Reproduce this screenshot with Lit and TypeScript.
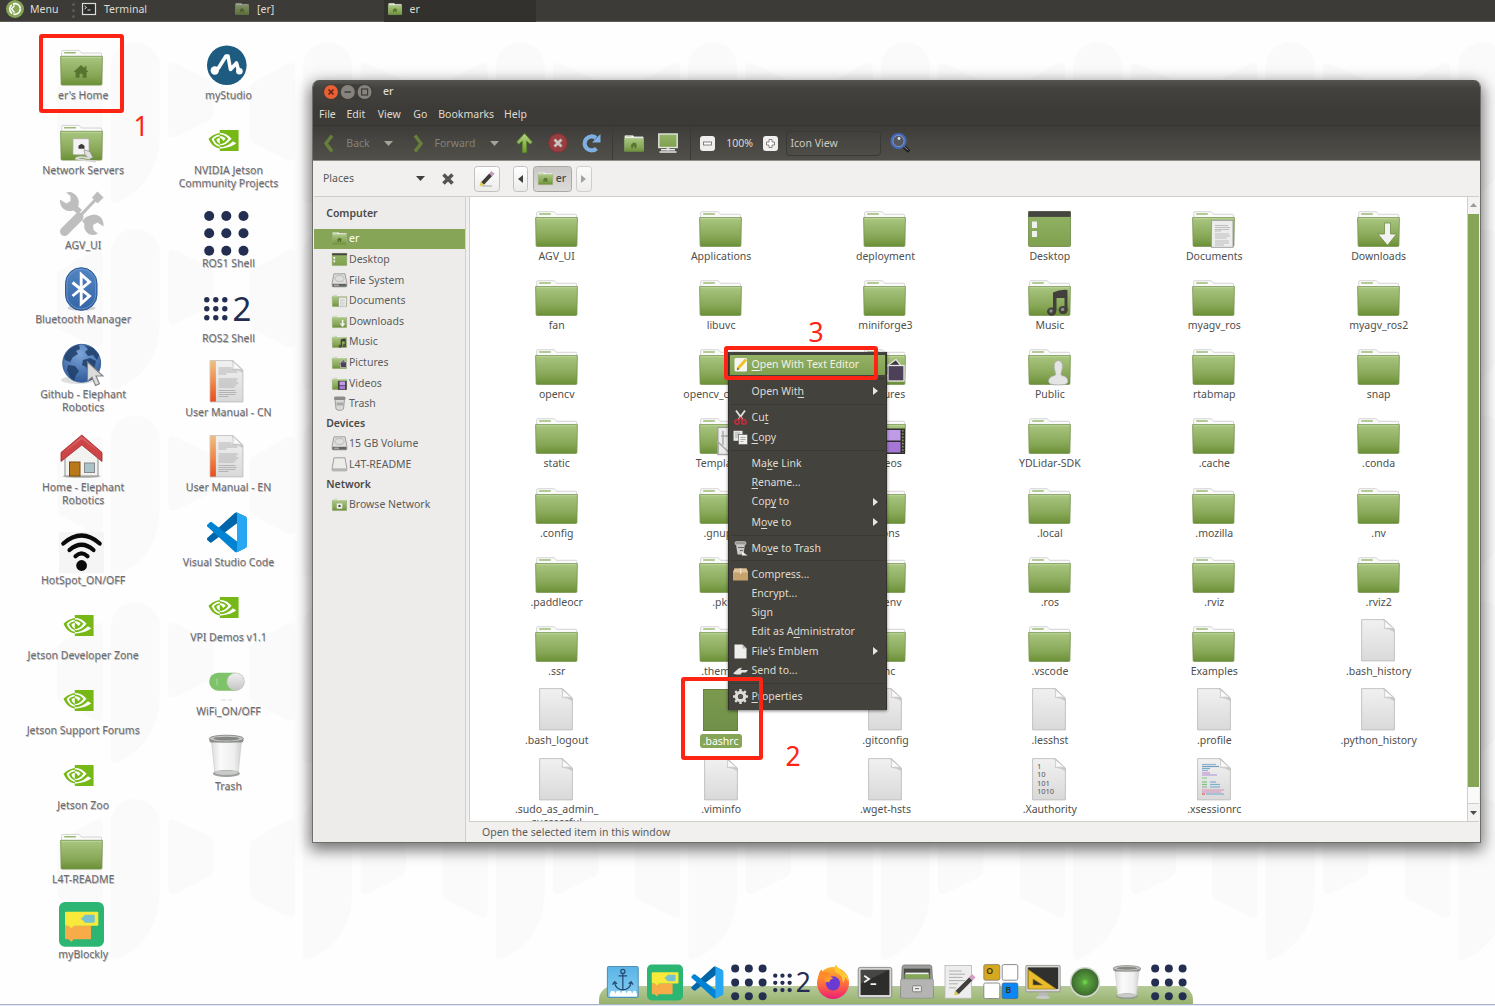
import { LitElement, html, svg, css, nothing } from "lit";
import { customElement } from "lit/decorators.js";
import { classMap } from "lit/directives/class-map.js";
import { styleMap } from "lit/directives/style-map.js";

/* ---------- emblems, drawn in the 43x36 box of a folder ---------- */
const houseShape = svg`<path d="M21 15.2l3.6 3.4v-2h1.8v3.7l2.2 2.1h-2v5.6h-4v-4h-3v4h-4v-5.6h-2z" fill="#57752e"/>`;

const emblems: Record<string, unknown> = {
  none: nothing,
  home: houseShape,
  documents: svg`
    <rect x="19.5" y="9.3" width="21.5" height="27" fill="#ececec" stroke="#9a9a9a" stroke-width=".9"/>
    <path d="M23 14.5h13M23 16.5h15M23 18.5h14M23 20h6M23 23h14M23 25h15M23 27h12M23 30h14M23 32h14M23 34h9" stroke="#b9b9b9" stroke-width=".9"/>`,
  downloads: svg`<path d="M27.5 12h6v11h6l-9 11.3-9.6-11.3h6.6z" fill="#f2f2f2" stroke="#6f8f45" stroke-width=".8"/>`,
  music: svg`
    <path d="M25 12.5q7-3.4 14.5-2.6v20h-3v-12h-8v13h-3.5z" fill="#41403d"/>
    <ellipse cx="23.6" cy="31.6" rx="4.6" ry="4.1" fill="#41403d"/><ellipse cx="35.2" cy="30" rx="4.6" ry="4.1" fill="#41403d"/>
    <circle cx="23" cy="31" r="1.7" fill="#8e8e8b"/><circle cx="34.6" cy="29.4" r="1.7" fill="#8e8e8b"/>`,
  people: svg`<path d="M20.5 32.5q0-4.800 6.300-6 1.700-.8.5-3-3.500-11.300 3-12 6.500.7 3 12-1.200 2.200.5 3 6.200 1.200 6.200 6 0 3.500-9.750 3.500t-9.750-3.500z" fill="#e4e4e4" stroke="#a9a9a9" stroke-width=".7"/>`,
  pictures: svg`
    <path d="M20 20l13-9.500 7 9-12 12z" fill="#3f3a40" stroke="#ddd" stroke-width="1.300"/>
    <rect x="25" y="16.500" width="16" height="15.500" fill="#4c4158" stroke="#e8e8e8" stroke-width="1.300"/>`,
  videos: svg`
    <rect x="17" y="10.500" width="25" height="25.500" fill="#2f2f2d"/>
    <rect x="21.500" y="12" width="16" height="10.500" fill="#bf9be8"/><rect x="21.500" y="24" width="16" height="10.500" fill="#a677d6"/>
    <path d="M19.300 12v23M39.800 12v23" stroke="#8a9b63" stroke-width="1.600" stroke-dasharray="1.600 1.600"/>`,
  templates: svg`
    <rect x="19" y="9.500" width="22" height="27" fill="#ececec" stroke="#9a9a9a" stroke-width=".9"/>
    <path d="M19 24l13 12.500h-13zM24 13v14M22 18h13" stroke="#a8a8a8" stroke-width="1.500" fill="none"/>`,
  network: svg`
    <rect x="13.500" y="14.500" width="16" height="15.500" rx="1" fill="#f3f3f3" stroke="#999" stroke-width=".7"/>
    <path d="M18.500 25v-4.500l3-2 3 2v4.500z" fill="#3c3c3a"/>`,
  cable: svg`
    <rect x="13" y="14" width="16" height="16" rx="1" fill="#f3f3f3" stroke="#aaa" stroke-width=".7"/>
    <path d="M18.500 24v-3l3-2 3 2v3z" fill="#3c3c3a"/>
    <path d="M24 25l6 2 3 6-4 1-4-4z" fill="#e0e0e0" stroke="#8c8c8c" stroke-width=".7"/>
    <path d="M30 34q-12-3-14 0 6 1.500 20 3" fill="none" stroke="#d8d8d8" stroke-width="1.800"/>`,
};

const folderShape = (emblem = "none") => svg`
  <path d="M1.700 34V1.900Q1.700.7 2.800.7H18.500Q19.600.7 20.300 1.600L21.600 3.300H40.600Q41.600 3.300 41.600 4.300V34z" fill="#fafafa" stroke="#c9c9c9" stroke-width=".8"/>
  <rect x="4" y="2.200" width="12" height="1.500" rx=".7" fill="#9aba72"/>
  <path d="M.6 6.600H42.400L41.900 34.400Q41.900 35.400 40.900 35.400H2.100Q1.100 35.400 1.100 34.400z" fill="url(#folderGreen)" stroke="#76934f" stroke-width=".8"/>
  <path d="M1.200 7.700H41.800" stroke="#c0d6a0" stroke-width=".8"/>
  ${emblems[emblem]}`;

const folder = (emblem = "none", cls = "folder") => html`<svg class=${cls} viewBox="0 0 43 36">${folderShape(emblem)}</svg>`;

const desktopGlyph = (cls: string) => html`<svg class=${cls} viewBox="0 0 43 36">
  <rect x=".5" y=".5" width="42" height="35" rx="1" fill="url(#deskGreen)" stroke="#6c8846" stroke-width=".8"/>
  <rect x=".3" y=".3" width="42.400" height="5.600" fill="#464541"/>
  <rect x="4" y="10.500" width="5" height="6.500" fill="#f0f0f0"/><rect x="4" y="20" width="5" height="6" fill="#f0f0f0"/>
</svg>`;

const pageShape = svg`
  <path d="M.6.6H23.500L33.400 10V41.900H.6z" fill="url(#paper)" stroke="#bdbdbd" stroke-width=".9"/>
  <path d="M22.500.8Q24.500 3 23.200 9.400 29 8.300 33.200 10.200z" fill="#fbfbfb" stroke="#c2c2c2" stroke-width=".8"/>
  <path d="M23.500 9.800q6-.8 9.600.8v2.400q-4-2.800-9.600-3.200z" fill="#bbb" opacity=".7"/>`;

const binaryRows: [number, string][] = [[10.500, "1"], [19, "10"], [27.500, "101"], [36, "1010"]];
const codeRows: [number, number, number, string][] = [
  [5, 6.500, 14, "#8fb4cc"], [5, 8.500, 17, "#6fa0c0"], [5, 10.500, 8, "#7da9c4"], [5, 12.500, 6, "#8fb4cc"],
  [5, 15, 8, "#c88fd0"], [5, 17, 15, "#b6a0d8"], [5, 20, 5, "#8fd08f"], [5, 24, 5, "#79c679"], [13, 24, 6, "#7fb0cf"],
  [5, 26.500, 5, "#79c679"], [13, 26.500, 10, "#7fb0cf"], [5, 29, 5, "#aaa"], [13, 29, 10, "#7fb0cf"],
  [5, 32, 22, "#d9a0b8"], [5, 34, 19, "#cf9cc0"], [5, 36, 3, "#e05050"], [9, 36, 18, "#7fb0cf"],
];

const page = (kind = "plain") => html`<svg class="page" viewBox="0 0 34 42.500">
  ${pageShape}
  ${kind === "binary" ? binaryRows.map(([y, t]) => svg`<text class="binary" x="5" y=${y}>${t}</text>`) : nothing}
  ${kind === "code" ? codeRows.map(([x, y, w, c]) => svg`<rect x=${x} y=${y - 0.6} width=${w} height="1.200" fill=${c}/>`) : nothing}
</svg>`;

/* ---------- launchers, each drawn in a 45x45 box ---------- */
const dots = (xs: number[], ys: number[], r: number) =>
  ys.map((y) => xs.map((x) => svg`<circle cx=${x} cy=${y} r=${r} fill="#232e50"/>`));

const trashShape = svg`
  <path d="M7.500 9L11 42q11.500 4.500 23 0L37.500 9z" fill="url(#glass)" stroke="#cfcfcf" stroke-width=".8"/>
  <ellipse cx="22.400" cy="41.500" rx="13.500" ry="3.600" fill="#8b8f8a" opacity=".8"/>
  <ellipse cx="22.400" cy="40.600" rx="12" ry="2.200" fill="#c9cbc8"/>
  <rect x="5.300" y="5" width="34.200" height="5.500" rx="2.600" fill="#8d8f8b"/>
  <ellipse cx="22.400" cy="6.600" rx="17" ry="3.400" fill="#c7c8c5" stroke="#8c8e8a" stroke-width="1"/>
  <ellipse cx="22.400" cy="6.600" rx="13" ry="1.900" fill="#858783"/>`;

const launchers: Record<string, unknown> = {
  home: svg`<g transform="translate(1 8.700)">${folderShape("home")}</g>`,
  network: svg`<g transform="translate(1 8.700)">${folderShape("cable")}</g>`,
  folder: svg`<g transform="translate(1 8.700)">${folderShape()}</g>`,
  tools: svg`
    <path d="M4 41L22 24M22 24L40 5" stroke="#bebebe" stroke-width="3.200"/>
    <path d="M20 26L5.500 40.500" stroke="#bebebe" stroke-width="9" stroke-linecap="round"/>
    <path d="M34 6.500L38.500 1.500 43.500 6.500 38.500 11.500z" fill="#bebebe" stroke="#bebebe" stroke-width="1.500"/>
    <path d="M.8 8.500l6.700 4 4-2.500 0-5-4.500-3.500Q14-.8 18.500 6.500 21 11.500 19 15.500L23 19 19 23.500 14.500 19.500Q8.500 21.500 4 17.500.8 14 .8 8.500z" fill="#bebebe"/>
    <path d="M27 26L29.500 25Q36.500 21.500 41.500 26 45 30 44.500 35.500L38.500 31.500 34 34 34.500 39 39 42.500Q32 46.500 27 40.500 24.500 37 25.200 32.500L23 30z" fill="#bebebe"/>`,
  bluetooth: svg`
    <ellipse cx="22.500" cy="43" rx="14" ry="3" fill="#000" opacity=".15"/>
    <rect x="6.500" y="2.700" width="31.500" height="42.600" rx="15.700" fill="url(#btBlue)" stroke="#2a5795" stroke-width="1"/>
    <rect x="7.900" y="4.100" width="28.700" height="39.800" rx="14.300" fill="none" stroke="#6f99cd" stroke-width=".8"/>
    <path d="M13.500 17.500L30.500 31 22.200 38.500V9.500L30.500 17 13.500 31" fill="none" stroke="#fff" stroke-width="2.900"/>`,
  globe: svg`
    <ellipse cx="19" cy="40" rx="17" ry="4" fill="#000" opacity=".12"/>
    <circle cx="22.700" cy="23.300" r="19" fill="url(#globeBlue)" stroke="#2b5590" stroke-width=".8"/>
    <path d="M8 12Q12 6 20 5L21 9 17 11 19 14 14 17 11 22 6 20 5 17zM9 25L16 26 20 31 17 35 15 41 11 37 8 30zM25 5L34 8 40 15 38 20 34 15 29 16 26 12 29 9zM24 20L31 18 37 21 35 30 30 34 27 27 23 25z" fill="#1f3d68" opacity=".85"/>
    <path d="M28.500 22V41.200L33 37.200 36.500 45.500 40.500 43.800 37 36H44z" fill="#dcdcdc" stroke="#828282" stroke-width="1.100"/>`,
  house: svg`
    <ellipse cx="22.500" cy="43.300" rx="19" ry="1.800" fill="#000" opacity=".25"/>
    <path d="M6 22L22.500 9 39 22V43H6z" fill="#f2f2f0" stroke="#8d8d88" stroke-width="1"/>
    <rect x="10.500" y="29" width="10.500" height="14" fill="#b9791a" stroke="#7c4c08" stroke-width="1"/>
    <rect x="25.500" y="30" width="10" height="9.500" fill="#a9c3c9" stroke="#888" stroke-width="1"/>
    <path d="M22.800 2L43 19.500V28.500L22.800 12 2 28.500V19.500z" fill="#ce4547" stroke="#9c2a2c" stroke-width=".8"/>
    <path d="M22.800 3.500L41 19.500 22.800 6 4 20z" fill="#e2787a" opacity=".6"/>`,
  hotspot: svg`
    <rect x="0" y="6" width="45" height="41.200" fill="#f5f5f5"/>
    <g fill="none" stroke="#0a0a0a" stroke-width="4.200" stroke-linecap="round">
      <path d="M4.300 17.500Q22.500 1.500 40.700 17.500"/><path d="M10.500 24Q22.500 13.500 34.500 24"/><path d="M16.500 30.200Q22.500 24.500 28.500 30.200"/>
    </g>
    <circle cx="22.600" cy="39.500" r="5.400" fill="#0a0a0a"/>`,
  nvidia: svg`<g transform="translate(4.600 8.800) scale(1.250 1.310)"><path fill="#76b916" d="M8.948 8.798v-1.430a6.700 6.700 0 0 1 .424-.018c3.922-.124 6.493 3.374 6.493 3.374s-2.774 3.851-5.750 3.851c-.398 0-.787-.062-1.158-.185v-4.346c1.528.185 1.837.857 2.747 2.385l2.040-1.714s-1.492-1.952-4-1.952a6.016 6.016 0 0 0-.796.035m0-4.735v2.138l.424-.027c5.450-.185 9.010 4.470 9.010 4.470s-4.080 4.964-8.330 4.964c-.370 0-.733-.035-1.095-.097v1.325c.3.035.610.062.910.062 3.957 0 6.820-2.023 9.593-4.408.459.371 2.340 1.263 2.730 1.652-2.633 2.208-8.772 3.984-12.253 3.984-.335 0-.653-.018-.971-.053v1.864H24V4.063zm0 10.326v1.131c-3.657-.654-4.673-4.460-4.673-4.460s1.758-1.944 4.673-2.262v1.237H8.940c-1.528-.186-2.730 1.245-2.730 1.245s.680 2.412 2.739 3.110M2.456 10.900s2.164-3.197 6.500-3.533V6.201C4.153 6.590 0 10.653 0 10.653s2.350 6.802 8.948 7.420v-1.237c-4.840-.6-6.492-5.936-6.492-5.936z"/></g>`,
  studio: svg`
    <circle cx="22.800" cy="24.300" r="19.800" fill="#1d5b80"/>
    <path d="M10.500 29.500L14.500 27 22 15 24 15 26.500 28.500 32.500 22 35 31" fill="none" stroke="#fff" stroke-width="3.600" stroke-linejoin="round" stroke-linecap="round"/>
    <circle cx="10.800" cy="29.500" r="4.200" fill="#fff"/><circle cx="35.400" cy="30.300" r="3.300" fill="#fff"/>`,
  ros: dots([5.200, 22.300, 39.500], [7, 24.300, 41.700], 5),
  ros2: svg`${dots([2.800, 11.800, 20.800], [15.800, 24.800, 33.800], 2.700)}<text class="two" x="28.500" y="36.500">2</text>`,
  manual: svg`
    <g transform="translate(5.500 2)">${pageShape}
      <rect x=".8" y=".8" width="5.600" height="40.800" fill="url(#spine)"/>
      <path d="M9 8h13M9 10h18M9 12h19M9 14h8M9 19h19M9 21h18M9 23h20M9 25h18M9 27h16M9 30.500h17M9 32.500h18M9 34.500h17M9 36.500h10" stroke="#b4b4b4" stroke-width="1"/>
    </g>`,
  vscode: svg`<g transform="translate(3 4.300) scale(.4)">
    <path fill="#0065a9" d="M96.460 10.800L75.860.875C73.470-.27 70.620.21 68.750 2.080L1.300 63.580c-1.810 1.650-1.810 4.510 0 6.160l5.510 5.010c1.490 1.350 3.720 1.450 5.320.24L93.360 13.370c2.730-2.070 6.640-.12 6.640 3.300v-.24c0-2.400-1.380-4.590-3.540-5.630z"/>
    <path fill="#0083d3" d="M96.460 89.200L75.860 99.120c-2.390 1.150-5.240.67-7.110-1.200L1.300 36.420c-1.810-1.650-1.810-4.510 0-6.160l5.510-5.010c1.490-1.350 3.720-1.450 5.320-.24L93.360 86.630c2.730 2.070 6.640.12 6.640-3.300v.24c0 2.400-1.380 4.590-3.540 5.630z"/>
    <path fill="#27a6f2" d="M75.860 99.130c-2.390 1.150-5.240.66-7.110-1.210 2.310 2.310 6.250.67 6.250-2.590V4.670c0-3.260-3.940-4.890-6.250-2.590 1.870-1.870 4.720-2.360 7.110-1.210l20.600 9.910c2.160 1.040 3.540 3.230 3.540 5.630v67.180c0 2.400-1.380 4.590-3.540 5.630z"/>
  </g>`,
  toggle: svg`
    <rect x="5.200" y="15.700" width="35.300" height="18" rx="9" fill="#7ec26a"/>
    <path d="M13 21.500v7" stroke="#a9dc9a" stroke-width="1"/>
    <circle cx="31.700" cy="24.700" r="8.700" fill="url(#knob)" stroke="#c9c9c9" stroke-width=".6"/>
    <path d="M17 43h5M24 43h4" stroke="#dadada" stroke-width="1.200"/>`,
  trash: trashShape,
  blockly: svg`
    <rect x="0" y="2" width="45" height="44.800" rx="6" fill="#2db673"/>
    <path d="M6 25.500H32V38.200Q32 39.200 31 39.200H14.500L12.500 42 9.500 39.200H7Q6 39.200 6 38.200z" fill="#f7ab49"/>
    <path d="M7 11.700H38.300Q39.300 11.700 39.300 12.700V24.700Q39.300 25.700 38.300 25.700H15L12.500 28.200 9.500 25.700H7Q6 25.700 6 24.700V12.700Q6 11.700 7 11.700z" fill="#f9e93a"/>
    <path d="M26 14.700H34.700Q35.700 14.700 35.700 15.700V21.700Q35.700 22.700 34.700 22.700H26L24 20.500 21.700 18.700 24 17z" fill="#76c1cf"/>`,
  anchor: svg`
    <rect x="3" y="4.500" width="38.500" height="38.500" rx="2" fill="url(#sky)" stroke="#4f8fb8" stroke-width="1.300"/>
    <g fill="none" stroke="#234c74" stroke-width="1.600"><circle cx="22.300" cy="10.500" r="2.600"/><path d="M22.300 13v20M17 16h10.600M12 24q1 9 10.300 9.500Q31.600 33 32.600 24M9.500 27l2.500-3.500 3 2.500M29.600 26l3-2.500 2.500 3.500"/></g>
    <path d="M6 42v-3l1.500-4h4l1.500 3 1.500-3h4l1.500 3 1.500-3h4l1.500 3 1.500-3h4l1.500 3 1.500-3h3l1.500 4v3z" fill="#fff"/>`,
  firefox: svg`
    <circle cx="22.500" cy="25" r="20" fill="url(#fox)"/>
    <path d="M26 2Q30 8 34 11 41 15 42 24 38 14 30 13z" fill="#ffde3a"/>
    <path d="M26 2Q23 7 26 12 35 15 35 25 40 18 36 12 29 8 26 2z" fill="#ffc833"/>
    <path d="M4 20Q4 12 8 8 9 11 11 12 15 11 19 13 15 16 13 19z" fill="#ff8a2a"/>
    <circle cx="22.500" cy="25.500" r="8.800" fill="#6a3bd2"/>
    <path d="M11 20q6-5 12-1-5 2-5 5-5 1-7-4z" fill="#ff9a30"/>`,
  terminal: svg`
    <rect x="1.500" y="5.500" width="42" height="38" rx="2.500" fill="#d5d5d3" stroke="#8a8a88" stroke-width="1.200"/>
    <rect x="4.500" y="8.500" width="36" height="31.500" fill="#2d2d2b"/>
    <path d="M4.500 8.500h36L4.500 26z" fill="#fff" opacity=".12"/>
    <path d="M9 16l6 4-6 4M17 26.500h7" fill="none" stroke="#f4f4f4" stroke-width="2.300"/>`,
  cabinet: svg`
    <path d="M4 5Q4 2.500 7 2.500H38Q41 2.500 41 5L43 43H2z" fill="#9d9d9b" stroke="#747472" stroke-width="1"/>
    <rect x="6" y="7" width="33" height="13" fill="#4b4b46"/>
    <path d="M8 12h29v8H8z" fill="#f0f0ee"/><path d="M7 14h31v6H7z" fill="#83a657"/>
    <rect x="2" y="20" width="41" height="24" rx="1.500" fill="#b4b4b2" stroke="#8a8a88" stroke-width=".8"/>
    <rect x="17" y="28.500" width="11" height="7.500" rx="1" fill="#eee" stroke="#7c7c7a" stroke-width="1.200"/><path d="M20 32h5" stroke="#777" stroke-width="1.500"/>`,
  editor: svg`
    <rect x="5" y="3" width="33" height="41" fill="#ededed" stroke="#b7b7b7" stroke-width="1"/>
    <path d="M10 10h16M10 14h20M10 18h17M10 22h20M10 26h11M10 31h9" stroke="#ababab" stroke-width="1.200"/>
    <path d="M20 37L38 19" stroke="#403f3b" stroke-width="5.500"/><path d="M37 20l4-4" stroke="#d79bc4" stroke-width="6"/><path d="M16.500 40.500l1-6.500 5 5z" fill="#d8c65a"/>`,
  keys: svg`
    <rect x="1" y="2" width="20" height="19.500" rx="2" fill="#d6a81e" stroke="#7c7c7c" stroke-width="1"/><rect x="24" y="2" width="19.500" height="19.500" rx="2" fill="#fff" stroke="#888" stroke-width="1.200"/>
    <rect x="1" y="25" width="20" height="19.500" rx="2" fill="#fff" stroke="#888" stroke-width="1.200"/><rect x="24" y="25" width="19.500" height="19.500" rx="2" fill="#0b86f5" stroke="#46688c" stroke-width="1"/>
    <text class="key" x="4" y="14">O</text><text class="key" x="28" y="38">B</text>`,
  ruler: svg`
    <path d="M18 36h9l2 7H16z" fill="#b9b9b7"/><ellipse cx="22.500" cy="43" rx="9" ry="2" fill="#c9c9c7"/>
    <rect x="1" y="3" width="43" height="33" rx="1.500" fill="#d8d8d6" stroke="#8a8a88" stroke-width="1"/><rect x="3.500" y="5.500" width="38" height="27" fill="#30302e"/>
    <path fill-rule="evenodd" d="M4 8V32.500H39zM10 20V27.500H22z" fill="#e8bc2c" stroke="#9c7a12" stroke-width=".8"/>`,
  orb: svg`
    <circle cx="22.500" cy="24" r="19" fill="#d4d8d0"/><circle cx="22.500" cy="24" r="17" fill="url(#orbGreen)"/>`,
};

const launcherIcon = (name: string, cls: string) => html`<svg class=${cls} viewBox="0 0 45 45">${launchers[name]}</svg>`;

/* ---------- small menu, toolbar and sidebar glyphs ---------- */
const small: Record<string, unknown> = {
  drive: svg`<path d="M2 .8h11L14.800 9.500V13q0 .8-.8.8H1q-.8 0-.8-.8V9.500z" fill="#dededc" stroke="#8c8c8a" stroke-width=".8"/><path d="M.6 10.800h13.800V13.600H.6z" fill="#62625f"/><ellipse cx="7.500" cy="5.500" rx="4.500" ry="3" fill="none" stroke="#b0b0ae" stroke-width=".8"/><path d="M2 12.200h5" stroke="#ddd" stroke-width=".8"/>`,
  usb: svg`<path d="M2 .8h11L14.800 11V13q0 .8-.8.8H1q-.8 0-.8-.8V11z" fill="#ececea" stroke="#8c8c8a" stroke-width=".8"/><path d="M.5 11.300h14V13.500H.5z" fill="#b5b5b3"/>`,
  bin: svg`<path d="M3 3h9.500l-1 10q-.3 1.300-3.700 1.300T4 13z" fill="#d9d9d7" stroke="#898987" stroke-width=".8"/><rect x="2" y=".6" width="11.500" height="3.400" rx="1.500" fill="#8b8b89"/><path d="M4.500 6.500h7v3h-7z" fill="#a9a9a7"/>`,
  edit: svg`<rect x="1.500" y="1" width="12.500" height="13.500" rx="1.500" fill="#f5f5f3"/><path d="M5 11.500L13 2.500" stroke="#eec321" stroke-width="2.800"/><path d="M3.800 13.200l.6-2.800 1.900 1.900z" fill="#7b5c17"/>`,
  cut: svg`<path d="M3 .5L9.500 9.500M12 .5L5.500 9.500" stroke="#dededc" stroke-width="1.900"/><circle cx="4" cy="12" r="2.100" fill="none" stroke="#c32b3a" stroke-width="1.700"/><circle cx="11" cy="12" r="2.100" fill="none" stroke="#c32b3a" stroke-width="1.700"/><path d="M5 10.500l2.500-2.800 2.500 2.800" stroke="#c32b3a" stroke-width="1.500" fill="none"/>`,
  copy: svg`<rect x=".5" y=".8" width="9" height="10" fill="#e6e6e4"/><path d="M2 3h5M2 5h3M2 7h3" stroke="#9a9a98" stroke-width=".8"/><rect x="5.500" y="4.500" width="9" height="10" fill="#f0f0ee" stroke="#55544f" stroke-width=".6"/><path d="M7.500 7.500h5M7.500 9.500h5M7.500 11.500h3" stroke="#9a9a98" stroke-width=".8"/>`,
  trashMove: svg`<path d="M3 3h9l-1.500 10.500h-6z" fill="#c9c9c7"/><rect x="2" y=".6" width="11" height="3.200" rx="1.400" fill="#989896" stroke="#d6d6d4" stroke-width=".6"/><path d="M5 6.500h6M7 9.500h3" stroke="#6a6965" stroke-width="1"/><path d="M9 10.500l5.500 4h-5.500z" fill="#eee"/>`,
  box: svg`<path d="M1.500 1.500h12L15 5v8.500H0V5z" fill="#c7a26c"/><path d="M1.500 1.500h12L15 5.500H0z" fill="#e0c499"/><path d="M7 1.500h1.200V7H7z" fill="#f2e3c8"/>`,
  sheet: svg`<path d="M1.500.5h8l4 4v10h-12z" fill="#efefed"/><path d="M9.500.5v4h4z" fill="#b9b9b7"/>`,
  send: svg`<path d="M0 10.500L5.500 5.500 9 4.500 7.500 7H15L13 9.500H9l-1.500 2H3z" fill="#e2e2e0"/>`,
  gear: svg`<circle cx="7.500" cy="7.500" r="4.200" fill="none" stroke="#dcdcda" stroke-width="3.200"/><path d="M7.500 0v15M0 7.500h15M2.200 2.200l10.600 10.600M12.800 2.200L2.200 12.800" stroke="#dcdcda" stroke-width="2.400" stroke-dasharray="3.200 8.600 3.200"/><circle cx="7.500" cy="7.500" r="2.200" fill="#55544f"/>`,
};
const smallIcon = (name: string) => html`<svg class="small" viewBox="0 0 15 15">${small[name]}</svg>`;

/* ---------- data ---------- */
interface Shortcut { icon: string; lines: string[] }
const s = (icon: string, ...lines: string[]): Shortcut => ({ icon, lines });
const shortcutColumns: Shortcut[][] = [
  [
    s("home", "er's Home"), s("network", "Network Servers"), s("tools", "AGV_UI"), s("bluetooth", "Bluetooth Manager"),
    s("globe", "Github - Elephant", "Robotics"), s("house", "Home - Elephant", "Robotics"), s("hotspot", "HotSpot_ON/OFF"),
    s("nvidia", "Jetson Developer Zone"), s("nvidia", "Jetson Support Forums"), s("nvidia", "Jetson Zoo"),
    s("folder", "L4T-README"), s("blockly", "myBlockly"),
  ],
  [
    s("studio", "myStudio"), s("nvidia", "NVIDIA Jetson", "Community Projects"), s("ros", "ROS1 Shell"), s("ros2", "ROS2 Shell"),
    s("manual", "User Manual - CN"), s("manual", "User Manual - EN"), s("vscode", "Visual Studio Code"), s("nvidia", "VPI Demos v1.1"),
    s("toggle", "WiFi_ON/OFF"), s("trash", "Trash"),
  ],
];

/* name, then an optional icon kind; folders are the default */
const files: [string, string?][] = [
  ["AGV_UI"], ["Applications"], ["deployment"], ["Desktop", "desktop"], ["Documents", "documents"], ["Downloads", "downloads"],
  ["fan"], ["libuvc"], ["miniforge3"], ["Music", "music"], ["myagv_ros"], ["myagv_ros2"],
  ["opencv"], ["opencv_contrib"], ["Pictures", "pictures"], ["Public", "people"], ["rtabmap"], ["snap"],
  ["static"], ["Templates", "templates"], ["Videos", "videos"], ["YDLidar-SDK"], [".cache"], [".conda"],
  [".config"], [".gnupg"], [".icons"], [".local"], [".mozilla"], [".nv"],
  [".paddleocr"], [".pki"], [".pyenv"], [".ros"], [".rviz"], [".rviz2"],
  [".ssr"], [".themes"], [".vnc"], [".vscode"], ["Examples"], [".bash_history", "page"],
  [".bash_logout", "page"], [".bashrc", "selected"], [".gitconfig", "page"], [".lesshst", "page"], [".profile", "page"], [".python_history", "page"],
  [".sudo_as_admin_ successful", "page"], [".viminfo", "page"], [".wget-hsts", "page"], [".Xauthority", "binary"], [".xsessionrc", "code"],
];

const sidebar: { title: string; rows: [string, string][] }[] = [
  { title: "Computer", rows: [["er", "home"], ["Desktop", "desktop"], ["File System", "drive"], ["Documents", "documents"], ["Downloads", "downloads"], ["Music", "music"], ["Pictures", "pictures"], ["Videos", "videos"], ["Trash", "bin"]] },
  { title: "Devices", rows: [["15 GB Volume", "drive"], ["L4T-README", "usb"]] },
  { title: "Network", rows: [["Browse Network", "network"]] },
];

const menus: [string, number][] = [["File", 27.500], ["Edit", 31.300], ["View", 35.500], ["Go", 25], ["Bookmarks", 65.800], ["Help", 30]];

/* label with the access key after "&"; an empty label is a separator */
interface Entry { label: string; h: number; icon?: string; sub?: boolean; active?: boolean }
const entries: Entry[] = [
  { label: "&Open With Text Editor", h: 19.500, icon: "edit", active: true }, { label: "", h: 7 },
  { label: "Open Wit&h", h: 19.500, sub: true }, { label: "", h: 6.500 },
  { label: "Cu&t", h: 19.500, icon: "cut" }, { label: "&Copy", h: 20, icon: "copy" }, { label: "", h: 6.500 },
  { label: "Ma&ke Link", h: 19 }, { label: "&Rename...", h: 19 }, { label: "Cop&y to", h: 20.500, sub: true }, { label: "M&ove to", h: 20, sub: true }, { label: "", h: 6.500 },
  { label: "Mo&ve to Trash", h: 19, icon: "trashMove" }, { label: "", h: 6.500 },
  { label: "Compress...", h: 20, icon: "box" }, { label: "Encrypt...", h: 19 }, { label: "Sign", h: 19 }, { label: "Edit as A&dministrator", h: 19 },
  { label: "File's Emblem", h: 20, icon: "sheet", sub: true }, { label: "Send to...", h: 19.500, icon: "send" }, { label: "", h: 6.500 },
  { label: "&Properties", h: 19.500, icon: "gear" },
];

const dock = ["anchor", "blockly", "vscode", "ros", "ros2", "firefox", "terminal", "cabinet", "editor", "keys", "ruler", "orb", "trash", "ros"];

const rowTops = [42.300, 229, 415.700, 602.300, 799];

@customElement("app-root")
export class AppRoot extends LitElement {
  static styles = css`
    :host { display: block; width: 1495px; height: 1006px; overflow: hidden; position: relative; background: #fefefe; color: #4c4c4c;
      font-family: "Noto Sans", "Open Sans", sans-serif; font-size: 10.5px; line-height: 13px; }
    * { box-sizing: border-box; }
    svg { display: block; overflow: visible; flex: none; }
    .defs { position: absolute; width: 0; height: 0; }
    .wallpaper { position: absolute; inset: 0; }
    .panel { position: relative; height: 22px; background: #3c3b37; border-bottom: 1px solid #5d5c58; display: flex; color: #dfdbd2; }
    .panel-cell { display: flex; align-items: center; height: 18px; }
    .menu-cell { width: 72px; padding-left: 6px; gap: 6px; }
    .task { width: 152.5px; height: 22px; padding: 0 0 4px 4px; gap: 8px; }
    .task-first { width: 156px; padding-left: 7px; }
    .task-active { background: #32312e; }
    .grip { width: 3px; display: grid; align-content: center; gap: 3px; }
    .grip-dot { width: 3px; height: 3px; border-radius: 50%; background: #5c5b56; }
    .dim { opacity: .6; }
    .task-icon { width: 14px; height: 12px; }

    .desktop { position: relative; display: flex; gap: 0; padding: 19px 0 0 10px; height: 980px; }
    .shortcuts { width: 145.3px; display: flex; flex-direction: column; }
    .shortcut { height: 74.75px; display: flex; flex-direction: column; align-items: center; }
    .shortcut-tall { height: 93.2px; }
    .launcher { width: 45px; height: 45px; margin-left: -3px; }
    .shortcut-label { margin-top: 3px; padding-left: 1px; text-align: center; white-space: nowrap; color: #6e6c70; text-shadow: .6px .5px .5px #b5b5b5; }
    .shortcut-line { display: block; }

    .window { position: absolute; left: 312px; top: 80px; width: 1169px; height: 763px; border: 1px solid #6f6e69; border-top: 0;
      border-radius: 7px 7px 0 0; background: #f1f0ee; overflow: hidden; display: flex; flex-direction: column; padding: 0 1px 0; }
    .window-shadow { position: absolute; left: 312px; top: 80px; width: 1169px; height: 763px; border-radius: 7px 7px 0 0; box-shadow: 0 5px 15px 2px rgba(0,0,0,.55); }
    .chrome { height: 81px; flex: none; margin: 0 -1px; padding: 0 1px; background: linear-gradient(#555450 0, #44433f 8px, #3c3b37 28px, #3c3b37 45px, #454440 58px, #504f49 80px); color: #dfdbd2; border-bottom: 1px solid #8f8d86; }
    .titlebar { height: 23px; display: flex; align-items: center; padding-left: 8.500px; }
    .title { padding-left: 10.500px; font-weight: 500; }
    .menubar { height: 22px; display: flex; align-items: center; padding-left: 5px; }
    .toolbar { height: 35px; border-top: 1px solid #35342f; display: grid; align-items: center; justify-items: center;
      grid-template-columns: 29px 30px 30px 31px 42px 36px 24px 44px 22px 21px 22px 46px 33px 31px 31px 95px 38px; }
    .muted { color: #84827b; }
    .rule { width: 1px; height: 34px; background: #3b3a36; }
    .pc { width: 46px; height: 34px; display: grid; place-items: center; border-right: 1px solid #3b3a36; }
    .combo { width: 95px; height: 25px; border: 1px solid #3a3935; border-radius: 4px; display: flex; align-items: center; padding-left: 3.5px; color: #cfcbc2; }
    .toolbar-folder { width: 20px; height: 17px; }

    .location { height: 36px; flex: none; border-bottom: 1px solid #cfcecb; display: flex; align-items: center; color: #5a5a58; }
    .places { width: 92.500px; padding-left: 9px; }
    .slot-caret { width: 27px; display: grid; place-items: center; }
    .slot-close { width: 29px; margin-right: 11px; display: grid; place-items: center; }
    .btn { height: 26px; display: flex; align-items: center; justify-content: center; border: 1px solid #c3c2bf; border-radius: 3.500px; background: linear-gradient(#fff, #ececea); }
    .btn-edit { width: 26px; margin-right: 13px; }
    .btn-prev { width: 15px; margin-right: 5px; }
    .btn-er { width: 39px; margin-right: 4px; gap: 3px; background: linear-gradient(#c9c8c6, #dcdbd9); border-color: #aaa9a6; font-weight: 500; color: #444; }
    .btn-next { width: 16px; opacity: .75; }
    .crumb { width: 15px; height: 13px; }

    .body { flex: 1; display: flex; min-height: 0; }
    .side { width: 152px; background: #edeceb; border-right: 1px solid #d0cfcc; }
    .side-title { height: 19.400px; display: flex; align-items: center; padding-left: 12.200px; font-weight: 600; color: #4a4a48; font-size: 10.5px; }
    .side-first { height: 31.700px; padding-top: 1px; }
    .side-row { height: 20.600px; display: flex; align-items: center; padding-left: 17.500px; gap: 2.500px; color: #5c5c5a; }
    .side-current { background: #87a556; color: #fff; }
    .side-folder { width: 15px; height: 13px; }
    .small { width: 15px; height: 15px; }
    .main { flex: 1; display: flex; flex-direction: column; min-width: 0; }
    .view { height: 625px; display: flex; border-left: 1px solid #d0cfcc; margin-left: 3px; border-bottom: 1px solid #cfcecb; background: #fff; overflow: hidden; }
    .files { flex: 1; display: grid; grid-template-columns: repeat(6, 164.400px); grid-auto-rows: 69.150px; padding: 5px 0 0 4px; align-content: start; }
    .file { display: flex; flex-direction: column; align-items: center; color: #4f4f4d; }
    .file-icon { height: 45px; flex: none; display: flex; align-items: flex-end; }
    .folder { width: 43px; height: 36px; }
    .page { width: 34px; height: 42.500px; }
    .page-selected { width: 35px; height: 42px; background: linear-gradient(#7c9a4e, #70904a); border: 1px solid #65833c; }
    .file-label { margin-top: 3px; padding-left: 1px; width: 92px; text-align: center; line-height: 12.500px; }
    .label-selected { width: auto; margin-top: 3px; padding: 1px 3px; border-radius: 3px; background: #87a556; color: #fff; }
    .scroll { width: 12.500px; border-left: 1px solid #cfcecb; display: flex; flex-direction: column; background: #fafaf9; }
    .scroll-btn { height: 17px; display: grid; place-items: center; background: #f4f3f2; }
    .scroll-thumb { height: 574px; background: #87a556; }
    .scroll-rest { height: 17px; border-bottom: 1px solid #d0cfcc; }
    .status { flex: 1; display: flex; align-items: center; padding-left: 16px; color: #5c5c5a; }

    .context { position: absolute; left: 728px; top: 352px; width: 159px; padding: 3px 1px; background: #43423c; border: 1px solid #32312d; border-width: 0 1px; color: #dfdbd2; box-shadow: 0 1px 3px rgba(0,0,0,.5); }
    .entry { display: grid; grid-template-columns: 19px 1fr 12.500px; align-items: center; padding-left: 2.500px; white-space: nowrap; }
    .entry-active { background: linear-gradient(#95b165, #7f9f50); color: #f2f2ea; }
    .entry-text { grid-column: 2; }
    .entry-key { text-decoration: underline; text-underline-offset: 1.500px; text-decoration-thickness: 1px; }
    .sep { display: flex; align-items: center; }
    .sep-line { flex: 1; height: 1px; background: #3a3934; }

    .dock { position: absolute; left: 599px; top: 963px; width: 594px; height: 41px; display: grid; grid-template-columns: repeat(14, 42.050px); padding-left: 2.500px; align-items: start; justify-items: center; }
    .dock-base { position: absolute; left: 599px; top: 986px; width: 594px; height: 18px; border-radius: 14px 14px 0 0; background: linear-gradient(#b6c99a, #97b26d); }
    .dock-icon { width: 36px; height: 36px; }
    .edge { position: absolute; left: 0; right: 0; top: 1004px; height: 2px; background: #e6ebf5; border-top: 1px solid #a9b3c6; }

    .mark { position: absolute; border: 4px solid #fe2414; border-radius: 3px; }
    .mark-1 { left: 39px; top: 34px; width: 85px; height: 79px; }
    .mark-2 { left: 681px; top: 677px; width: 82px; height: 83px; }
    .mark-3 { left: 724px; top: 346px; width: 154px; height: 34px; }
    .digit { position: absolute; color: #fe2414; font-size: 26.5px; line-height: 30px; width: 20px; text-align: center; }
    .digit-1 { left: 131px; top: 111px; }
    .digit-2 { left: 783px; top: 741px; }
    .digit-3 { left: 806px; top: 317px; }
    .two { font-size: 33px; fill: #232e50; }
    .binary { font-size: 7.500px; font-weight: 500; fill: #6f6f6f; }
    .key { font-size: 11px; font-weight: 600; fill: #3a3110; }
  `;

  private defs() {
    const grad = (id: string, ...stops: [number, string][]) => svg`
      <linearGradient id=${id} x1="0" y1="0" x2="0" y2="1">${stops.map(([o, c]) => svg`<stop offset=${o} stop-color=${c}/>`)}</linearGradient>`;
    return html`<svg class="defs"><defs>
      ${grad("folderGreen", [0, "#a9c680"], [0.65, "#88a858"], [0.85, "#789a45"], [1, "#6a9034"])}
      ${grad("deskGreen", [0, "#93b465"], [1, "#7fa04e"])}
      ${grad("paper", [0, "#f1f1f1"], [1, "#d9d9d9"])}
      ${grad("spine", [0, "#efbf80"], [0.5, "#f08a4b"], [1, "#e84c1e"])}
      ${grad("btBlue", [0, "#5384c2"], [1, "#3465a6"])}
      ${grad("sky", [0, "#5ab4e6"], [1, "#86cdf2"])}
      ${grad("fox", [0, "#ffb52c"], [0.5, "#ff7139"], [1, "#ee1d78"])}
      ${grad("arrow", [0, "#b5d483"], [1, "#6d9c2f"])}
      ${grad("knob", [0, "#f1f1f1"], [1, "#c4c4c4"])}
      <linearGradient id="glass"><stop offset="0" stop-color="#dcdcdc"/><stop offset=".3" stop-color="#fafafa"/><stop offset=".75" stop-color="#efefef"/><stop offset="1" stop-color="#d0d0d0"/></linearGradient>
      <radialGradient id="globeBlue" cx=".45" cy=".25" r=".8"><stop offset="0" stop-color="#7ba4d8"/><stop offset="1" stop-color="#2c5796"/></radialGradient>
      <radialGradient id="orbGreen"><stop offset="0" stop-color="#6fe84e"/><stop offset=".25" stop-color="#58a03e"/><stop offset="1" stop-color="#3d6b2e"/></radialGradient>
    </defs></svg>`;
  }

  private wallpaper() {
    return html`<svg class="wallpaper" width="1495" height="1006">
      ${rowTops.map((y) => [0, 1, 2, 3, 4, 5, 6, 7].map((i) => svg`
        <g transform="translate(${110.700 + i * 192.500} ${y})" fill="#fafafa">
          <path d="M-17 22Q-8 17-8 28V112Q-8 121-17 117L-49 101Q-53.500 98-53.500 92V46Q-53.500 42-49 40z"/>
          <path d="M0 24.500A24.500 24.500 0 0 1 49 24.500V92Q49 140 7 160 0 163 0 156z"/>
          <path d="M57.300 27Q57.300 17 66 22L98 37Q102.700 40 102.700 45V71Q102.700 75 98 78L68 93Q57.300 99 57.300 87z"/>
        </g>`))}
    </svg>`;
  }

  private panel() {
    return html`<div class="panel">
      <div class="panel-cell menu-cell">
        <svg width="18" height="18" viewBox="0 0 18 18"><circle cx="9" cy="9" r="9" fill="#87a556"/><circle cx="9" cy="9" r="5.300" fill="none" stroke="#fff" stroke-width="1.700" stroke-dasharray="9.800 1.300"/><path d="M8.500 5.500l-3 3.500 3 3.500" fill="none" stroke="#fff" stroke-width="1.300"/></svg>
        <span>Menu</span>
      </div>
      <div class="grip"><span class="grip-dot"></span><span class="grip-dot"></span><span class="grip-dot"></span></div>
      <div class="panel-cell task task-first">
        <svg class="task-icon" viewBox="0 0 14 12"><rect x=".5" y=".5" width="13" height="11" fill="#2d2d2b" stroke="#dcdcda" stroke-width="1.200"/><path d="M2.500 3l2 1.500-2 1.500M5.500 7h3" stroke="#eee" fill="none" stroke-width=".9"/></svg>
        <span>Terminal</span>
      </div>
      <div class="panel-cell task"><span class="dim">${folder("home", "task-icon")}</span><span>[er]</span></div>
      <div class="panel-cell task task-active">${folder("home", "task-icon")}<span>er</span></div>
    </div>`;
  }

  private shortcut(item: Shortcut) {
    return html`<div class=${classMap({ shortcut: true, "shortcut-tall": item.lines.length > 1 })}>
      ${launcherIcon(item.icon, "launcher")}
      <div class="shortcut-label">${item.lines.map((l) => html`<span class="shortcut-line">${l}</span>`)}</div>
    </div>`;
  }

  private chrome() {
    const caret = html`<svg width="9" height="5" viewBox="0 0 9 5"><path d="M0 0h9L4.500 5z" fill="#a5a29a"/></svg>`;
    return html`<div class="chrome">
      <div class="titlebar">
        <svg width="50" height="16" viewBox="0 0 50 16">
          <rect width="50" height="16" rx="8" fill="#3a3935" opacity=".6"/>
          <circle cx="8" cy="8" r="7" fill="#ea5f33"/><path d="M5.500 5.500l5 5M10.500 5.500l-5 5" stroke="#5e2513" stroke-width="1.600"/>
          <circle cx="24.800" cy="8" r="7" fill="#85837c"/><path d="M21.500 8h6.500" stroke="#3c3b37" stroke-width="1.400"/>
          <circle cx="41.600" cy="8" r="7" fill="#85837c"/><rect x="38.600" y="5" width="6" height="6" fill="none" stroke="#3c3b37" stroke-width="1.200"/>
        </svg>
        <span class="title">er</span>
      </div>
      <div class="menubar">${menus.map(([m, w]) => html`<span style=${styleMap({ width: `${w}px` })}>${m}</span>`)}</div>
      <div class="toolbar">
        <svg width="11" height="19" viewBox="0 0 11 19"><path d="M9 1.500L3 9.500l6 8" fill="none" stroke="#65803d" stroke-width="3.400"/></svg>
        <span class="muted">Back</span>${caret}
        <svg width="11" height="19" viewBox="0 0 11 19"><path d="M2 1.500l6 8-6 8" fill="none" stroke="#65803d" stroke-width="3.400"/></svg>
        <span class="muted">Forward</span>${caret}
        <svg width="17" height="20" viewBox="0 0 17 20"><path d="M8.500.5L16.300 9l-2 2.200L10.600 8v11.500H6.400V8L2.700 11.200.7 9z" fill="url(#arrow)" stroke="#5d8628" stroke-width=".8"/></svg>
        <svg width="20" height="20" viewBox="0 0 20 20"><circle cx="10" cy="10" r="9.400" fill="#963e40" stroke="#7b3032"/><path d="M6.500 6.500l7 7M13.500 6.500l-7 7" stroke="#c9c2bd" stroke-width="2.800"/></svg>
        <svg width="19" height="20" viewBox="0 0 19 20"><path d="M14.500 15.500A7 7 0 1 1 14 5" fill="none" stroke="#7fb0e4" stroke-width="4.200"/><path d="M10 9.500h8.500V1z" fill="#7fb0e4"/></svg>
        <span class="rule"></span>
        ${folder("home", "toolbar-folder")}
        <div class="pc"><svg width="20" height="20" viewBox="0 0 20 20"><rect x=".8" y="1" width="18.400" height="13.500" fill="url(#deskGreen)" stroke="#e4e4e2" stroke-width="1.400"/><path d="M8.500 15h3v2.500h-3z" fill="#cfcfcd"/><path d="M3 16.800h14M1.500 19h17" stroke="#e8e8e6" stroke-width="1.500"/></svg></div>
        <svg width="15" height="15" viewBox="0 0 15 15"><rect width="15" height="15" rx="3" fill="#f0efed"/><rect x="3.500" y="6" width="8" height="3" fill="#fff" stroke="#777" stroke-width=".9"/></svg>
        <span>100%</span>
        <svg width="15" height="15" viewBox="0 0 15 15"><rect width="15" height="15" rx="3" fill="#f0efed"/><path d="M6 3.500h3V6h2.500v3H9v2.500H6V9H3.500V6H6z" fill="#fff" stroke="#777" stroke-width=".9"/></svg>
        <div class="combo">Icon View</div>
        <svg width="20" height="20" viewBox="0 0 20 20"><path d="M13 13l6 5.500" stroke="#1f1f1d" stroke-width="3.600"/><path d="M13.500 13l4.500 4" stroke="#8b8a86" stroke-width="1"/><circle cx="8.500" cy="8" r="7" fill="#55575f" stroke="#4169c0" stroke-width="2.200"/><circle cx="8.500" cy="8" r="5.600" fill="none" stroke="#8ea6d8" stroke-width=".8"/><circle cx="9" cy="5.500" r="1.400" fill="#dfe4ee"/></svg>
      </div>
    </div>`;
  }

  private location() {
    return html`<div class="location">
      <span class="places">Places</span>
      <span class="slot-caret"><svg width="9" height="5" viewBox="0 0 9 5"><path d="M0 0h9L4.500 5z" fill="#3e3e3c"/></svg></span>
      <span class="slot-close"><svg width="12" height="12" viewBox="0 0 12 12"><path d="M1.500 1.500l9 9M10.500 1.500l-9 9" stroke="#555553" stroke-width="3.600"/></svg></span>
      <span class="btn btn-edit"><svg width="18" height="18" viewBox="0 0 18 18"><path d="M4 16h10" stroke="#000" opacity=".15" stroke-width="2"/><path d="M4.500 13.500L13 4.500" stroke="#3c3b38" stroke-width="4"/><path d="M12.500 5l2.500-2.600" stroke="#c89ac0" stroke-width="4.200"/><path d="M1.500 16.500l1.200-5 3.700 3.600z" fill="#d8d05a"/></svg></span>
      <span class="btn btn-prev"><svg width="5" height="8" viewBox="0 0 5 8"><path d="M5 0v8L0 4z" fill="#3e3e3c"/></svg></span>
      <span class="btn btn-er">${folder("home", "crumb")}<span>er</span></span>
      <span class="btn btn-next"><svg width="5" height="8" viewBox="0 0 5 8"><path d="M0 0v8L5 4z" fill="#8b8985"/></svg></span>
    </div>`;
  }

  private sideIcon(kind: string) {
    if (kind === "desktop") return desktopGlyph("side-folder");
    return kind in small ? smallIcon(kind) : folder(kind, "side-folder");
  }

  private fileIcon(kind = "none") {
    if (kind === "desktop") return desktopGlyph("folder");
    if (kind === "selected") return html`<div class="page-selected"></div>`;
    if (kind === "page" || kind === "binary" || kind === "code") return page(kind);
    return folder(kind);
  }

  private windowView() {
    return html`<div class="window-shadow"></div><div class="window">
      ${this.chrome()} ${this.location()}
      <div class="body">
        <div class="side">
          ${sidebar.map((g, gi) => html`
            <div class=${classMap({ "side-title": true, "side-first": gi === 0 })}>${g.title}</div>
            ${g.rows.map(([name, kind]) => html`<div class=${classMap({ "side-row": true, "side-current": name === "er" })}>${this.sideIcon(kind)}<span>${name}</span></div>`)}`)}
        </div>
        <div class="main">
          <div class="view">
            <div class="files">
              ${files.map(([name, kind]) => html`<div class="file">
                <div class="file-icon">${this.fileIcon(kind)}</div>
                <div class=${classMap({ "file-label": true, "label-selected": kind === "selected" })}>${name}</div>
              </div>`)}
            </div>
            <div class="scroll">
              <div class="scroll-btn"><svg width="7" height="4" viewBox="0 0 7 4"><path d="M0 4h7L3.500 0z" fill="#9b9a97"/></svg></div>
              <div class="scroll-thumb"></div>
              <div class="scroll-rest"></div>
              <div class="scroll-btn"><svg width="7" height="4" viewBox="0 0 7 4"><path d="M0 0h7L3.500 4z" fill="#4c4c4a"/></svg></div>
            </div>
          </div>
          <div class="status">Open the selected item in this window</div>
        </div>
      </div>
    </div>`;
  }

  private entry(e: Entry) {
    const size = styleMap({ height: `${e.h}px` });
    if (!e.label) return html`<div class="sep" style=${size}><span class="sep-line"></span></div>`;
    const at = e.label.indexOf("&");
    const text = at < 0 ? e.label : html`${e.label.slice(0, at)}<span class="entry-key">${e.label[at + 1]}</span>${e.label.slice(at + 2)}`;
    return html`<div class=${classMap({ entry: true, "entry-active": !!e.active })} style=${size}>
      ${e.icon ? smallIcon(e.icon) : nothing}<span class="entry-text">${text}</span>
      ${e.sub ? html`<svg width="5" height="8" viewBox="0 0 5 8"><path d="M0 0v8L5 4z" fill="#e8e6e0"/></svg>` : nothing}
    </div>`;
  }

  render() {
    return html`
      ${this.defs()} ${this.wallpaper()} ${this.panel()}
      <div class="desktop">${shortcutColumns.map((c) => html`<div class="shortcuts">${c.map((i) => this.shortcut(i))}</div>`)}</div>
      ${this.windowView()}
      <div class="context">${entries.map((e) => this.entry(e))}</div>
      <div class="dock-base"></div>
      <div class="dock">${dock.map((d) => launcherIcon(d, "dock-icon"))}</div>
      <div class="edge"></div>
      <div class="mark mark-1"></div><div class="mark mark-2"></div><div class="mark mark-3"></div>
      <span class="digit digit-1">1</span><span class="digit digit-2">2</span><span class="digit digit-3">3</span>
    `;
  }
}
